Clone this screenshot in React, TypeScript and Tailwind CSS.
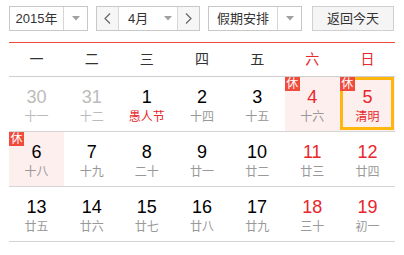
import React from "react";

type Day = {
  n: number;
  l: string;
  kind?: "prev" | "weekend";
  fest?: boolean;
  rest?: boolean;
  selected?: boolean;
};

const rows: Day[][] = [
  [
    { n: 30, l: "十一", kind: "prev" },
    { n: 31, l: "十二", kind: "prev" },
    { n: 1, l: "愚人节", fest: true },
    { n: 2, l: "十四" },
    { n: 3, l: "十五" },
    { n: 4, l: "十六", kind: "weekend", rest: true },
    { n: 5, l: "清明", kind: "weekend", fest: true, rest: true, selected: true },
  ],
  [
    { n: 6, l: "十八", rest: true },
    { n: 7, l: "十九" },
    { n: 8, l: "二十" },
    { n: 9, l: "廿一" },
    { n: 10, l: "廿二" },
    { n: 11, l: "廿三", kind: "weekend" },
    { n: 12, l: "廿四", kind: "weekend" },
  ],
  [
    { n: 13, l: "廿五" },
    { n: 14, l: "廿六" },
    { n: 15, l: "廿七" },
    { n: 16, l: "廿八" },
    { n: 17, l: "廿九" },
    { n: 18, l: "三十", kind: "weekend" },
    { n: 19, l: "初一", kind: "weekend" },
  ],
];

const weekdays = ["一", "二", "三", "四", "五", "六", "日"];

function Caret() {
  return (
    <svg width="8" height="5" viewBox="0 0 8 5">
      <path d="M0 0 L8 0 L4 4.5 Z" fill="#a0a0a0" />
    </svg>
  );
}

function Chevron({ dir }: { dir: "l" | "r" }) {
  return (
    <svg width="7" height="11" viewBox="0 0 7 11">
      <path
        d={dir === "l" ? "M6 0.5 L1 5.5 L6 10.5" : "M1 0.5 L6 5.5 L1 10.5"}
        fill="none"
        stroke="#666"
        strokeWidth="1.2"
      />
    </svg>
  );
}

export default function App() {
  return (
    <div
      className="w-[404px] h-[255px] bg-white px-[9px] pt-[6px] text-[#333]"
      style={{ fontFamily: '"Liberation Sans", Arial, "Noto Sans CJK SC", sans-serif' }}
    >
      {/* controls */}
      <div className="flex h-[25px] text-[13px]">
        <div className="flex w-[79px] border border-[#c8c8c8] bg-white">
          <div className="flex w-[54px] items-center justify-center border-r border-[#d6d6d6]">2015年</div>
          <div className="flex flex-1 items-center justify-center">
            <Caret />
          </div>
        </div>
        <div className="ml-[8px] flex w-[104px] border border-[#c8c8c8] bg-white">
          <div className="flex w-[22px] items-center justify-center border-r border-[#d6d6d6] bg-[#f6f6f6]">
            <Chevron dir="l" />
          </div>
          <div className="flex w-[59px] items-center border-r border-[#d6d6d6] pl-[9px]">
            <span>4月</span>
            <span className="ml-[16px] flex">
              <Caret />
            </span>
          </div>
          <div className="flex flex-1 items-center justify-center bg-[#f6f6f6]">
            <Chevron dir="r" />
          </div>
        </div>
        <div className="ml-[8px] flex w-[94px] border border-[#c8c8c8] bg-white">
          <div className="flex w-[69px] items-center justify-center border-r border-[#d6d6d6]">假期安排</div>
          <div className="flex flex-1 items-center justify-center">
            <Caret />
          </div>
        </div>
        <div className="ml-[10px] flex w-[82px] items-center justify-center border border-[#cfcfcf] bg-[#f5f5f5]">
          返回今天
        </div>
      </div>

      {/* calendar */}
      <div className="mt-[11px] border-t border-[#f04b3c]">
        <div className="grid h-[34px] grid-cols-7 border-b border-[#cfcfcf] text-[14px]">
          {weekdays.map((w, i) => (
            <div
              key={w}
              className={`flex items-center justify-center ${i >= 5 ? "text-[#e8262b]" : "text-[#333]"}`}
            >
              {w}
            </div>
          ))}
        </div>
        {rows.map((row, ri) => (
          <div key={ri} className="grid h-[55px] grid-cols-7 border-b border-[#d4d4d4]">
            {row.map((d, ci) => {
              const numColor =
                d.kind === "prev" ? "text-[#bbbbbb]" : d.kind === "weekend" ? "text-[#e8262b]" : "text-[#000]";
              const lunarColor = d.fest
                ? "text-[#e8262b]"
                : d.kind === "prev"
                ? "text-[#bbbbbb]"
                : "text-[#999999]";
              return (
                <div
                  key={ci}
                  className={`relative flex flex-col items-center pt-[10px] ${d.rest ? "bg-[#fdefee]" : ""}`}
                >
                  {d.selected && (
                    <div className="absolute left-0 right-[1px] top-0 bottom-[1px] border-[3px] border-[#ffb70f]" />
                  )}
                  {d.rest && (
                    <div className="absolute left-0 top-0 z-10 flex h-[14px] w-[15px] items-center justify-center bg-[#f04b3c] text-[12px] leading-none text-white">
                      休
                    </div>
                  )}
                  <div className={`text-[18px] leading-[20px] ${numColor}`}>{d.n}</div>
                  <div className={`mt-[2px] text-[12px] leading-[16px] ${lunarColor}`}>{d.l}</div>
                </div>
              );
            })}
          </div>
        ))}
      </div>
    </div>
  );
}
